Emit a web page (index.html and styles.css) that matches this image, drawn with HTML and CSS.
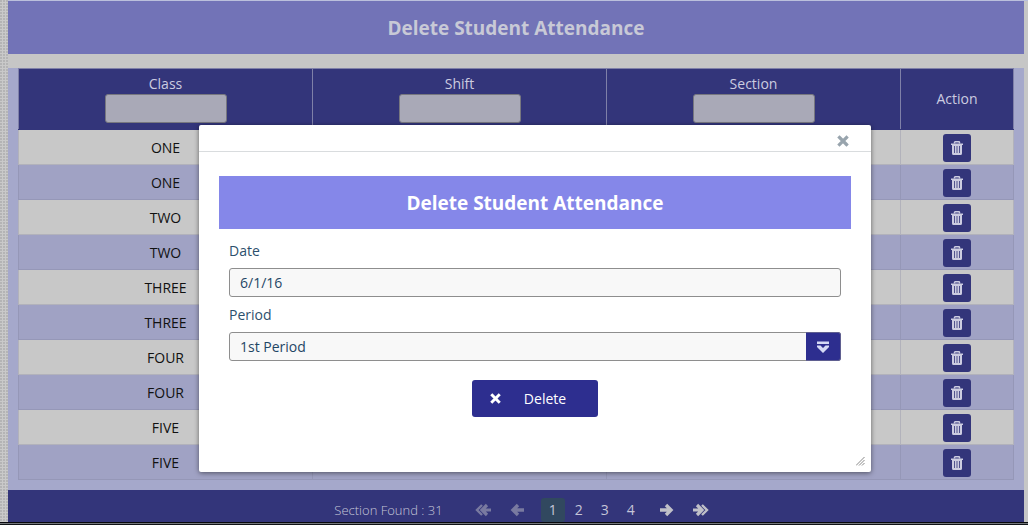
FILE: index.html
```html
<!DOCTYPE html>
<html lang="en">
<head>
<meta charset="utf-8">
<title>Delete Student Attendance</title>
<link rel="stylesheet" href="styles.css">
</head>
<body>
<svg class="sprite" aria-hidden="true">
  <symbol id="trash" viewBox="0 0 14 14">
    <path d="M4.500 2.500V1.500Q4.500 .8 5.200 .8H8.800Q9.500 .8 9.500 1.500V2.500" fill="none" stroke="currentColor" stroke-width="1.500"/>
    <path fill="currentColor" fill-rule="evenodd" d="M1 2.500H13V4H12V12.500Q12 14 10.500 14H3.500Q2 14 2 12.500V4H1ZM4 5V12H4.800V5ZM6.600 5V12H7.400V5ZM9.200 5V12H10V5Z"/>
  </symbol>
  <symbol id="cross" viewBox="0 0 12 12">
    <path d="M2.500 2.500L9.500 9.500M9.500 2.500L2.500 9.500" fill="none" stroke="currentColor" stroke-width="3.200" stroke-linecap="square"/>
  </symbol>
  <symbol id="next" viewBox="0 0 16 14">
    <path d="M1 7H12M7 2L12 7L7 12" fill="none" stroke="currentColor" stroke-width="3.400"/>
  </symbol>
  <symbol id="last" viewBox="0 0 16 14">
    <path d="M0 7H8.500M4 2L9 7L4 12" fill="none" stroke="currentColor" stroke-width="3.200"/>
    <path d="M9 2L14 7L9 12" fill="none" stroke="currentColor" stroke-width="2.400"/>
  </symbol>
</svg>
<div class="page">
  <main class="content">
    <h1 class="banner">Delete Student Attendance</h1>
    <section class="panel">
      <table class="grid">
        <thead>
          <tr>
            <th><label for="f-class">Class</label><input class="filter" id="f-class" type="text"></th>
            <th><label for="f-shift">Shift</label><input class="filter" id="f-shift" type="text"></th>
            <th><label for="f-section">Section</label><input class="filter" id="f-section" type="text"></th>
            <th class="action">Action</th>
          </tr>
        </thead>
        <tbody>
          <tr><td>ONE</td><td></td><td></td><td><button class="trash" aria-label="Delete"><svg><use href="#trash"/></svg></button></td></tr>
          <tr><td>ONE</td><td></td><td></td><td><button class="trash" aria-label="Delete"><svg><use href="#trash"/></svg></button></td></tr>
          <tr><td>TWO</td><td></td><td></td><td><button class="trash" aria-label="Delete"><svg><use href="#trash"/></svg></button></td></tr>
          <tr><td>TWO</td><td></td><td></td><td><button class="trash" aria-label="Delete"><svg><use href="#trash"/></svg></button></td></tr>
          <tr><td>THREE</td><td></td><td></td><td><button class="trash" aria-label="Delete"><svg><use href="#trash"/></svg></button></td></tr>
          <tr><td>THREE</td><td></td><td></td><td><button class="trash" aria-label="Delete"><svg><use href="#trash"/></svg></button></td></tr>
          <tr><td>FOUR</td><td></td><td></td><td><button class="trash" aria-label="Delete"><svg><use href="#trash"/></svg></button></td></tr>
          <tr><td>FOUR</td><td></td><td></td><td><button class="trash" aria-label="Delete"><svg><use href="#trash"/></svg></button></td></tr>
          <tr><td>FIVE</td><td></td><td></td><td><button class="trash" aria-label="Delete"><svg><use href="#trash"/></svg></button></td></tr>
          <tr><td>FIVE</td><td></td><td></td><td><button class="trash" aria-label="Delete"><svg><use href="#trash"/></svg></button></td></tr>
        </tbody>
      </table>
    </section>
    <nav class="pager">
      <span class="count">Section Found : 31</span>
      <span class="group">
        <button class="arrow back" aria-label="First page" disabled><svg><use href="#last"/></svg></button>
        <button class="arrow back" aria-label="Previous page" disabled><svg><use href="#next"/></svg></button>
      </span>
      <span class="group numbers">
        <a class="num current" href="#1">1</a>
        <a class="num" href="#2">2</a>
        <a class="num" href="#3">3</a>
        <a class="num" href="#4">4</a>
      </span>
      <span class="group">
        <button class="arrow" aria-label="Next page"><svg><use href="#next"/></svg></button>
        <button class="arrow" aria-label="Last page"><svg><use href="#last"/></svg></button>
      </span>
    </nav>
  </main>
  <div class="edge"></div>

  <div class="dialog" role="dialog" aria-labelledby="dialog-title">
    <div class="dialog-bar">
      <button class="close" aria-label="Close"><svg><use href="#cross"/></svg></button>
    </div>
    <div class="dialog-body">
      <h2 class="dialog-title" id="dialog-title">Delete Student Attendance</h2>
      <form class="form">
        <label class="label" for="date">Date</label>
        <input class="field" id="date" type="text" value="6/1/16">
        <label class="label" for="period">Period</label>
        <div class="select">
          <select class="field" id="period"><option>1st Period</option></select>
          <span class="select-icon">
            <svg viewBox="0 0 12 12"><path d="M0 .5H12V3H0ZM0 4.500H3.500L6 7L8.500 4.500H12V6L6 12L0 6Z" fill="currentColor"/></svg>
          </span>
        </div>
        <button class="submit" type="button"><svg><use href="#cross"/></svg><span>Delete</span></button>
      </form>
    </div>
    <svg class="grip" viewBox="0 0 9 9"><path d="M0 8.500L8.500 0M3 8.500L8.500 3M6 8.500L8.500 6" stroke="#888" fill="none"/></svg>
  </div>
</div>
</body>
</html>
```
FILE: styles.css
```css
* { box-sizing: border-box; }

body {
  margin: 0;
  background: #c6c6c6;
  font: 14px/20px "Open Sans", "Noto Sans", sans-serif;
}

button, input, select { font: inherit; margin: 0; }
button { border: 0; padding: 0; cursor: pointer; }

.sprite { position: absolute; width: 0; height: 0; }

.page {
  position: relative;
  padding: 1px 4px 0 8px;
  background:
    linear-gradient(#bbc0dc, #bbc0dc) 8px 0 / 100% 1px no-repeat,
    radial-gradient(circle at 1px 1px, #b4b4b5 1px, transparent 1px) 0 0 / 3px 3px,
    #c9c9c9;
}

.content { background: #c6c6c6; margin-right: -4px; padding-right: 4px; }

.banner, .dialog-title {
  margin: 0;
  padding-top: 1px;
  font-size: 19px;
  line-height: 52px;
  font-weight: 700;
  text-align: center;
}

.banner { background: #7273b7; color: #c8c9d6; }

.panel {
  margin-top: 14px;
  padding: 0 10px 10px;
  background: #a5a8cb;
}

.grid {
  width: 100%;
  table-layout: fixed;
  border-collapse: collapse;
  text-align: center;
}

.grid th {
  height: 61px;
  padding: 5px 0 6px;
  border: 1px solid #7f80a8;
  border-bottom-color: #33357a;
  background: #33357a;
  color: #cccce0;
  font-weight: 400;
}

.grid th.action { width: 113px; }
.grid th label { display: block; }

.filter {
  display: block;
  width: 122px;
  height: 29px;
  margin: 0 auto;
  border: 1px solid #77777f;
  border-radius: 3px;
  background: #a9a9b7;
}

.grid td {
  height: 35px;
  padding: 1px 0 0;
  border: 1px solid #9597b7;
  color: #111;
}

.grid tbody tr { background: #c8c8c8; }
.grid tbody tr:nth-child(even) { background: #a0a2c4; }

.grid tbody tr:nth-child(odd) td { border-color: #b2b2bb; }

.trash {
  display: block;
  width: 28px;
  height: 28px;
  margin: 0 auto;
  border-radius: 3px;
  background: #33357a;
  color: #cccce0;
}

.trash svg { display: block; width: 14px; height: 14px; margin: auto; }

.pager {
  display: flex;
  justify-content: center;
  align-items: center;
  gap: 7px;
  padding: 8px 0 0 20px;
  background: #33357a;
  color: #c5c5d8;
}

.count { font-size: 13px; font-weight: 300; margin-right: 16px; }
.group { display: flex; }
.numbers { gap: 2px; }

.num {
  width: 24px;
  line-height: 24px;
  border-radius: 3px;
  color: inherit;
  text-align: center;
  text-decoration: none;
}

.num.current { background: #31485f; }

.arrow {
  display: flex;
  align-items: center;
  justify-content: center;
  width: 34px;
  height: 24px;
  background: none;
  color: #c0c0c8;
}

.arrow svg { width: 16px; height: 14px; }
.back { color: #797aa0; transform: scaleX(-1); }

.edge {
  height: 3px;
  margin: 0 -4px 0 -8px;
  border-top: 1px solid #08090c;
  border-bottom: 1px solid #101418;
  background: #74777c;
}

.dialog {
  position: absolute;
  top: 125px;
  left: 199px;
  right: 157px;
  border-radius: 2px;
  background: #fff;
  box-shadow: 0 1px 5px rgba(0, 0, 0, .5);
  color: #2c506d;
}

.dialog-bar {
  display: flex;
  justify-content: flex-end;
  padding: 6px 22px 0;
  height: 27px;
  border-bottom: 1px solid #d9dcde;
}

.close { width: 12px; height: 20px; background: none; color: #98a4ad; }
.close svg { display: block; width: 12px; height: 12px; }

.dialog-body { padding: 24px 20px 55px; }
.dialog-title { background: #8587e9; color: #fff; }

.form { display: flex; flex-direction: column; padding: 12px 10px 0; }
.label { margin-bottom: 7px; }

.field {
  display: block;
  width: 100%;
  height: 29px;
  margin-bottom: 8px;
  padding: 0 10px;
  border: 1px solid #8e8e8e;
  border-radius: 3px;
  background: #f8f8f8;
  color: #1f4665;
}

.select { position: relative; }
.select .field { appearance: none; margin-bottom: 0; }

.select-icon {
  position: absolute;
  top: 0;
  right: 0;
  bottom: 0;
  display: flex;
  align-items: center;
  justify-content: center;
  width: 35px;
  border: 1px solid #5f5f90;
  border-left: 0;
  border-radius: 0 3px 3px 0;
  background: #2d2e8f;
  color: #d5daf5;
  pointer-events: none;
}

.select-icon svg { width: 12px; height: 12px; }

.submit {
  display: flex;
  align-items: center;
  align-self: center;
  width: 126px;
  height: 37px;
  margin-top: 19px;
  padding: 0 18px;
  border-radius: 3px;
  background: #2d2e8f;
  color: #fff;
}

.submit svg { width: 11px; height: 11px; }
.submit span { flex: 1; padding-left: 9px; }

.grip { position: absolute; right: 6px; bottom: 6px; width: 9px; height: 9px; }
```
